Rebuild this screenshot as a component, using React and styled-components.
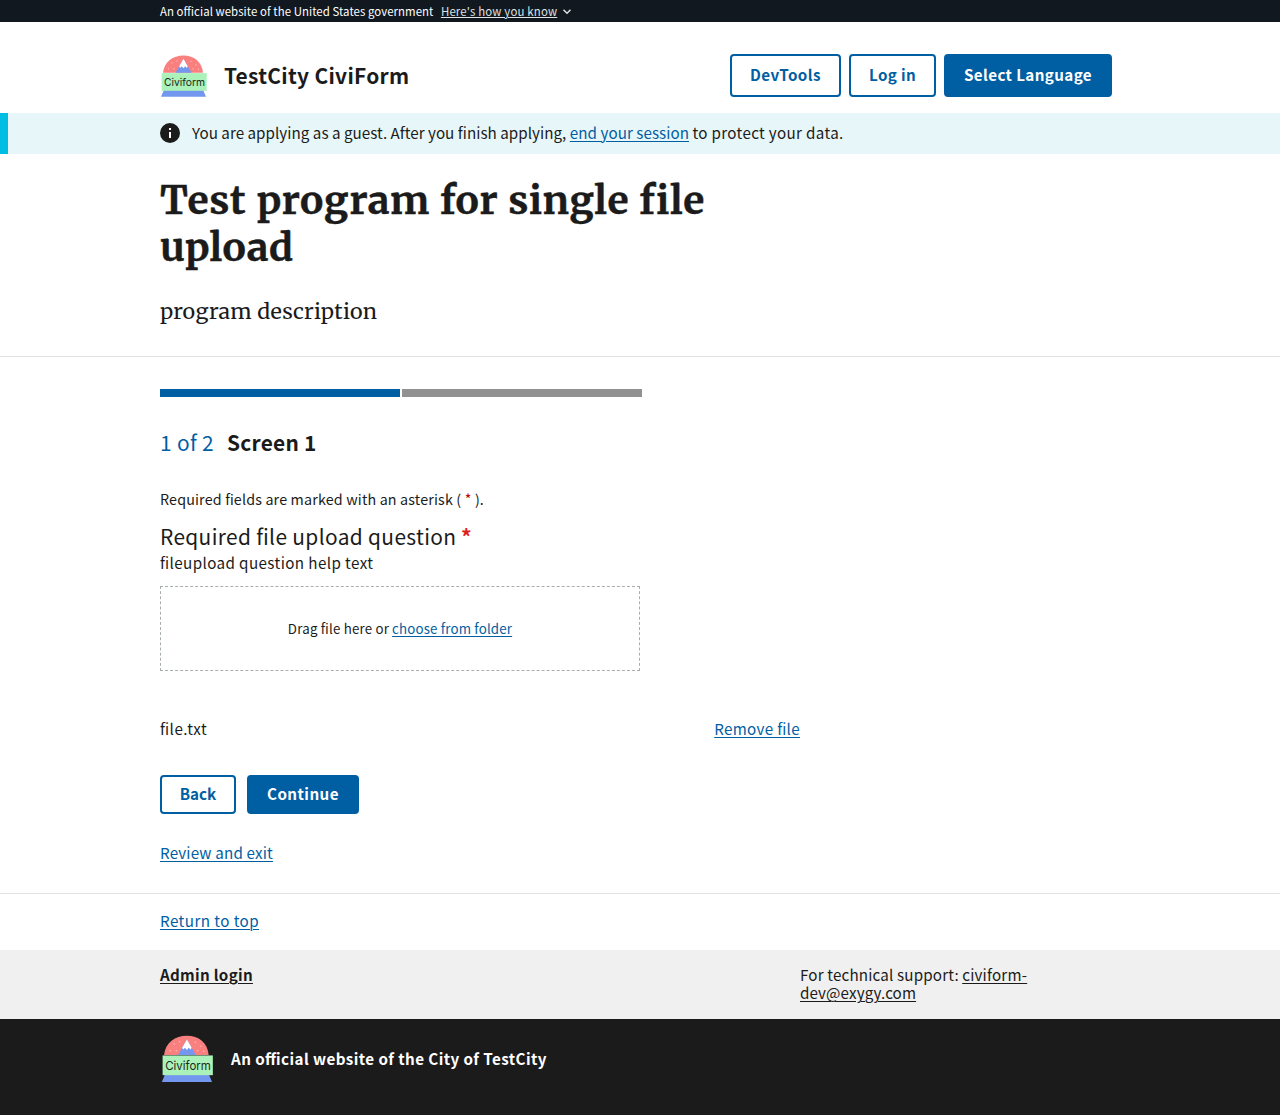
import React from 'react';
import styled, { createGlobalStyle } from 'styled-components';

const ink = '#1b1b1b';
const blue = '#005ea2';
const sans = '"Source Sans Pro", "Noto Sans CJK SC", "Noto Sans", sans-serif';

const GlobalStyle = createGlobalStyle`
  *, *::before, *::after { box-sizing: border-box; }
  body {
    margin: 0;
    background: #fff;
    color: ${ink};
    font-family: ${sans};
    font-size: 15.2px;
    line-height: 20px;
    font-feature-settings: "liga" 1;
  }
  h1, h2, p { margin: 0; font-weight: inherit; font-size: inherit; }
`;

const Container = styled.div`
  width: 960px;
  margin: 0 auto;
`;

const Text = styled.span`
  letter-spacing: ${(p) => p.$track || 0}px;
  white-space: nowrap;
`;

const Link = styled.a`
  color: ${(p) => p.$color || blue};
  letter-spacing: ${(p) => p.$track || 0}px;
  font-weight: ${(p) => (p.$bold ? 700 : 400)};
  text-decoration: underline;
  text-decoration-thickness: 1px;
  text-underline-offset: 2px;
  cursor: pointer;
`;

const Banner = styled.header`
  height: 22px;
  background: #11181f;
  color: #fff;
  font-size: 11.4px;
  line-height: 22px;
`;

const BannerRow = styled(Container)`
  display: flex;
  align-items: center;
`;

const BannerLink = styled(Link)`
  margin: 0 5px 0 7.5px;
  text-underline-offset: 1px;
`;

const NavBar = styled(Container)`
  display: flex;
  align-items: center;
  height: 91px;
  padding: 16px 8px 0 0;
`;

const SiteName = styled.div`
  flex: 1;
  margin-left: 16px;
  padding-bottom: 2px;
  font-size: 20.9px;
  font-weight: 700;
  line-height: 30px;
`;

const ButtonRow = styled.div`
  display: flex;
  gap: ${(p) => p.$gap || 8}px;
`;

const Button = styled.button`
  width: ${(p) => p.$width}px;
  height: ${(p) => p.$height || 43}px;
  padding: 0 0 4px;
  border: 2px solid ${blue};
  border-radius: 4px;
  background: ${(p) => (p.$solid ? blue : '#fff')};
  color: ${(p) => (p.$solid ? '#fff' : blue)};
  font: 700 15.2px/20px ${sans};
  cursor: pointer;
`;

const Alert = styled.section`
  height: 41px;
  border-left: 8px solid #00bde3;
  padding-right: 8px;
  background: #e7f6f8;
`;

const AlertRow = styled(Container)`
  display: flex;
  align-items: center;
  height: 40px;
`;

const AlertText = styled.p`
  margin-left: 12px;
  padding-bottom: 3px;
`;

const ProgramHeader = styled.section`
  height: 203px;
  padding-top: 23px;
  border-bottom: 1px solid #dfe1e2;
  font-family: "Merriweather", "DejaVu Serif Condensed", "DejaVu Serif", serif;
  font-feature-settings: normal;
`;

const ProgramTitle = styled.h1`
  font-size: 39px;
  font-weight: 700;
  line-height: 47px;
  -webkit-text-stroke: 0.4px ${ink};
`;

const ProgramDescription = styled.p`
  margin-top: 26px;
  font-size: 21.5px;
  line-height: 30px;
`;

const Main = styled.main`
  height: 537px;
  padding-top: 32px;
  border-bottom: 1px solid #dfe1e2;
`;

const Progress = styled.div`
  display: flex;
  gap: 2px;
`;

const Segment = styled.div`
  width: 240px;
  height: 8px;
  background: ${(p) => (p.$done ? blue : '#919191')};
`;

const StepTitle = styled.h2`
  display: flex;
  gap: 13px;
  margin-top: 30px;
  font-size: 20.9px;
  font-weight: 700;
  line-height: 30px;
`;

const StepCount = styled(Text)`
  color: ${blue};
  font-weight: 400;
`;

const Note = styled.p`
  margin-top: 32px;
  font-size: 14.3px;
  line-height: 20px;
`;

const Star = styled.abbr`
  color: ${(p) => (p.$bold ? '#e02020' : '#b50909')};
  font-weight: ${(p) => (p.$bold ? 700 : 400)};
`;

const Question = styled.p`
  margin-top: 12px;
  font-size: 20.9px;
  line-height: 30px;
`;

const Help = styled.p`
  line-height: 22px;
`;

const DropZone = styled.div`
  display: flex;
  align-items: center;
  justify-content: center;
  width: 480px;
  height: 85px;
  margin-top: 13px;
  border: 1px dashed #a9aeb1;
  font-size: 13.3px;
`;

const FileRow = styled.div`
  display: flex;
  justify-content: space-between;
  width: 640px;
  margin: 47px 0 37px;
`;

const Review = styled.p`
  margin-top: 28px;
`;

const ReturnBar = styled(Container)`
  height: 56px;
  padding-top: 16px;
`;

const FooterNav = styled.nav`
  height: 69px;
  padding-top: 15px;
  background: #f0f0f0;
  line-height: 18px;
`;

const FooterRow = styled(Container)`
  display: grid;
  grid-template-columns: 640px 320px;
`;

const Identity = styled.footer`
  height: 96px;
  padding-top: 16px;
  background: ${ink};
  color: #fff;
  font-weight: 700;
`;

const IdentityRow = styled(Container)`
  display: flex;
  align-items: center;
  gap: 16px;
  height: 48px;
`;

const IdentityText = styled(Text)`
  padding-bottom: 2px;
`;

const Logo = ({ width, height, top = 0 }) => (
  <svg width={width} height={height} viewBox={`0 ${-top} 48 43`} aria-label="Civiform">
    <path d="M3 18C4 7 13 .7 23.500 .7S42 7 43 18Z" fill="#fa8080" />
    <path d="M15.500 18L23.500 4l8 14Z" fill="#7397ee" />
    <path d="M19.200 11.500L23.500 4l4.200 7.500-.8 1.600-1.800-1.600-1.600 2-1.800-2-1.500 1.600Z" fill="#fff" />
    <g fill="#ffc9c9">
      <circle cx="12" cy="8" r=".6" /><circle cx="17" cy="6" r=".6" /><circle cx="8.500" cy="14" r=".6" />
      <circle cx="14" cy="14" r=".6" /><circle cx="31" cy="6.500" r=".6" /><circle cx="36" cy="10" r=".6" />
      <circle cx="33" cy="14" r=".6" /><circle cx="38.500" cy="14.500" r=".6" />
    </g>
    <path d="M4 35h39l3 7H1Z" fill="#7397ee" />
    <rect x="1.700" y="18.300" width="45" height="17.700" fill="#aaf2b9" />
    <text x="4" y="31.200" fontFamily="Inter, Roboto, sans-serif" fontSize="10.800" fontWeight="400" textLength="41" lengthAdjust="spacingAndGlyphs" fill="#1c2b20">Civiform</text>
  </svg>
);

export default function App() {
  return (
    <>
      <GlobalStyle />
      <Banner>
        <BannerRow>
          <Text $track={0.065}>An official website of the United States government</Text>
          <BannerLink $color="#dfe1e2" $track={0.18}>Here's how you know</BannerLink>
          <svg width="10" height="8" viewBox="0 0 10 8" fill="none" stroke="#dfe1e2" strokeWidth="1.500"><path d="M1.500 2.700L5 6.200l3.500-3.500" /></svg>
        </BannerRow>
      </Banner>
      <NavBar>
        <Logo width={48} height={43} top={0.8} />
        <SiteName><Text $track={0.3}>TestCity CiviForm</Text></SiteName>
        <ButtonRow>
          <Button $width={111}><Text $track={0.42}>DevTools</Text></Button>
          <Button $width={87}><Text $track={0.35}>Log in</Text></Button>
          <Button $width={168} $solid><Text $track={0.38}>Select Language</Text></Button>
        </ButtonRow>
      </NavBar>
      <Alert>
        <AlertRow>
          <svg width="20" height="20" viewBox="0 0 20 20"><circle cx="10" cy="10" r="10" fill={ink} /><path d="M9 5h2v2H9zM9 9h2v6H9z" fill="#fff" /></svg>
          <AlertText>
            <Text $track={0.03}>You are applying as a guest. After you finish applying,</Text>{' '}
            <Link $track={0.05}>end your session</Link>{' '}
            <Text $track={0.33}>to protect your data.</Text>
          </AlertText>
        </AlertRow>
      </Alert>
      <ProgramHeader>
        <Container>
          <ProgramTitle>
            <Text $track={0.69}>Test program for single file</Text><br />
            <Text $track={0.45}>upload</Text>
          </ProgramTitle>
          <ProgramDescription><Text $track={0.22}>program description</Text></ProgramDescription>
        </Container>
      </ProgramHeader>
      <Main>
        <Container>
          <Progress><Segment $done /><Segment /></Progress>
          <StepTitle><StepCount $track={0.33}>1 of 2</StepCount><Text $track={0.25}>Screen 1</Text></StepTitle>
          <Note><Text $track={0.16}>Required fields are marked with an asterisk ( <Star>*</Star> ).</Text></Note>
          <Question><Text $track={0.35}>Required file upload question</Text> <Star $bold>*</Star></Question>
          <Help><Text $track={0.4}>fileupload question help text</Text></Help>
          <DropZone><p><Text $track={0.2}>Drag file here or</Text> <Link $track={0.17}>choose from folder</Link></p></DropZone>
          <FileRow><Text $track={0.5}>file.txt</Text><Link $track={0.32}>Remove file</Link></FileRow>
          <ButtonRow $gap={11}>
            <Button $width={76} $height={39}><Text>Back</Text></Button>
            <Button $width={112} $height={39} $solid><Text $track={0.44}>Continue</Text></Button>
          </ButtonRow>
          <Review><Link $track={0.16}>Review and exit</Link></Review>
        </Container>
      </Main>
      <ReturnBar><Link $track={0.43}>Return to top</Link></ReturnBar>
      <FooterNav>
        <FooterRow>
          <div><Link $bold $color={ink} $track={0.3}>Admin login</Link></div>
          <div>
            <Text $track={0.16}>For technical support:</Text> <Link $color={ink} $track={0.2}>civiform-</Link><br />
            <Link $color={ink} $track={0.1}>dev@exygy.com</Link>
          </div>
        </FooterRow>
      </FooterNav>
      <Identity>
        <IdentityRow>
          <Logo width={55} height={48} />
          <IdentityText $track={0.42}>An official website of the City of TestCity</IdentityText>
        </IdentityRow>
      </Identity>
    </>
  );
}
